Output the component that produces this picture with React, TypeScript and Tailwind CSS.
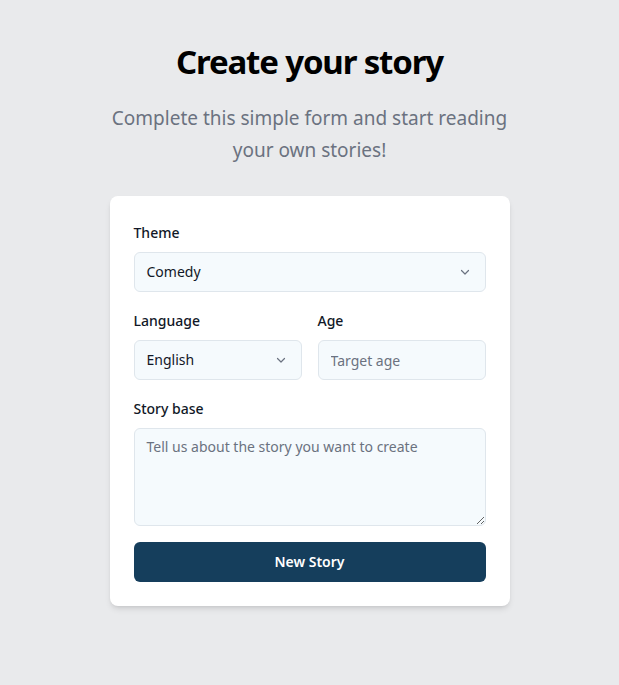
import React from "react";

function Chevron() {
  return (
    <svg width="12" height="12" viewBox="0 0 12 12" className="pointer-events-none absolute right-[15px] top-1/2 -translate-y-1/2" fill="none">
      <path d="M2.5 4.5 L6 8 L9.5 4.5" stroke="#6b7280" strokeWidth="1.2" strokeLinecap="round" strokeLinejoin="round" />
    </svg>
  );
}

export default function App() {
  return (
    <div className="min-h-[685px] bg-[#e9eaec] pt-[42px] font-['Noto_Sans',sans-serif]">
      <h1 className="text-center text-[33px] font-bold leading-[40px] tracking-[-0.035em] text-black">Create your story</h1>
      <p className="mx-auto mt-[20px] w-[420px] text-center text-[19px] leading-[32px] text-[#6b7280]">
        Complete this simple form and start reading your own stories!
      </p>
      <div className="mx-auto mt-[30px] w-[400px] rounded-lg bg-white p-6 shadow-md">
        <label className="mb-2 block pt-px text-sm font-medium leading-[23px] text-[#111827]">Theme</label>
        <div className="relative mb-4">
          <div className="flex h-10 items-center rounded-md border border-[#dfe6ec] bg-[#f5fafd] px-3 text-sm text-[#111827]">Comedy</div>
          <Chevron />
        </div>
        <div className="mb-4 grid grid-cols-2 gap-4">
          <div>
            <label className="mb-2 block pt-px text-sm font-medium leading-[23px] text-[#111827]">Language</label>
            <div className="relative">
              <div className="flex h-10 items-center rounded-md border border-[#dfe6ec] bg-[#f5fafd] px-3 text-sm text-[#111827]">English</div>
              <Chevron />
            </div>
          </div>
          <div>
            <label className="mb-2 block pt-px text-sm font-medium leading-[23px] text-[#111827]">Age</label>
            <input
              placeholder="Target age"
              className="block h-10 w-full rounded-md border border-[#dfe6ec] bg-[#f5fafd] px-3 text-sm text-[#111827] outline-none placeholder:text-[#6b7280]"
            />
          </div>
        </div>
        <label className="mb-2 block pt-px text-sm font-medium leading-[23px] text-[#111827]">Story base</label>
        <textarea
          placeholder="Tell us about the story you want to create"
          className="mb-4 block h-[98px] w-full rounded-md border border-[#dfe6ec] bg-[#f5fafd] px-3 py-2 text-sm text-[#111827] outline-none placeholder:text-[#6b7280]"
        />
        <button className="block h-10 w-full rounded-md bg-[#153e5c] text-sm font-semibold text-white">New Story</button>
      </div>
    </div>
  );
}
